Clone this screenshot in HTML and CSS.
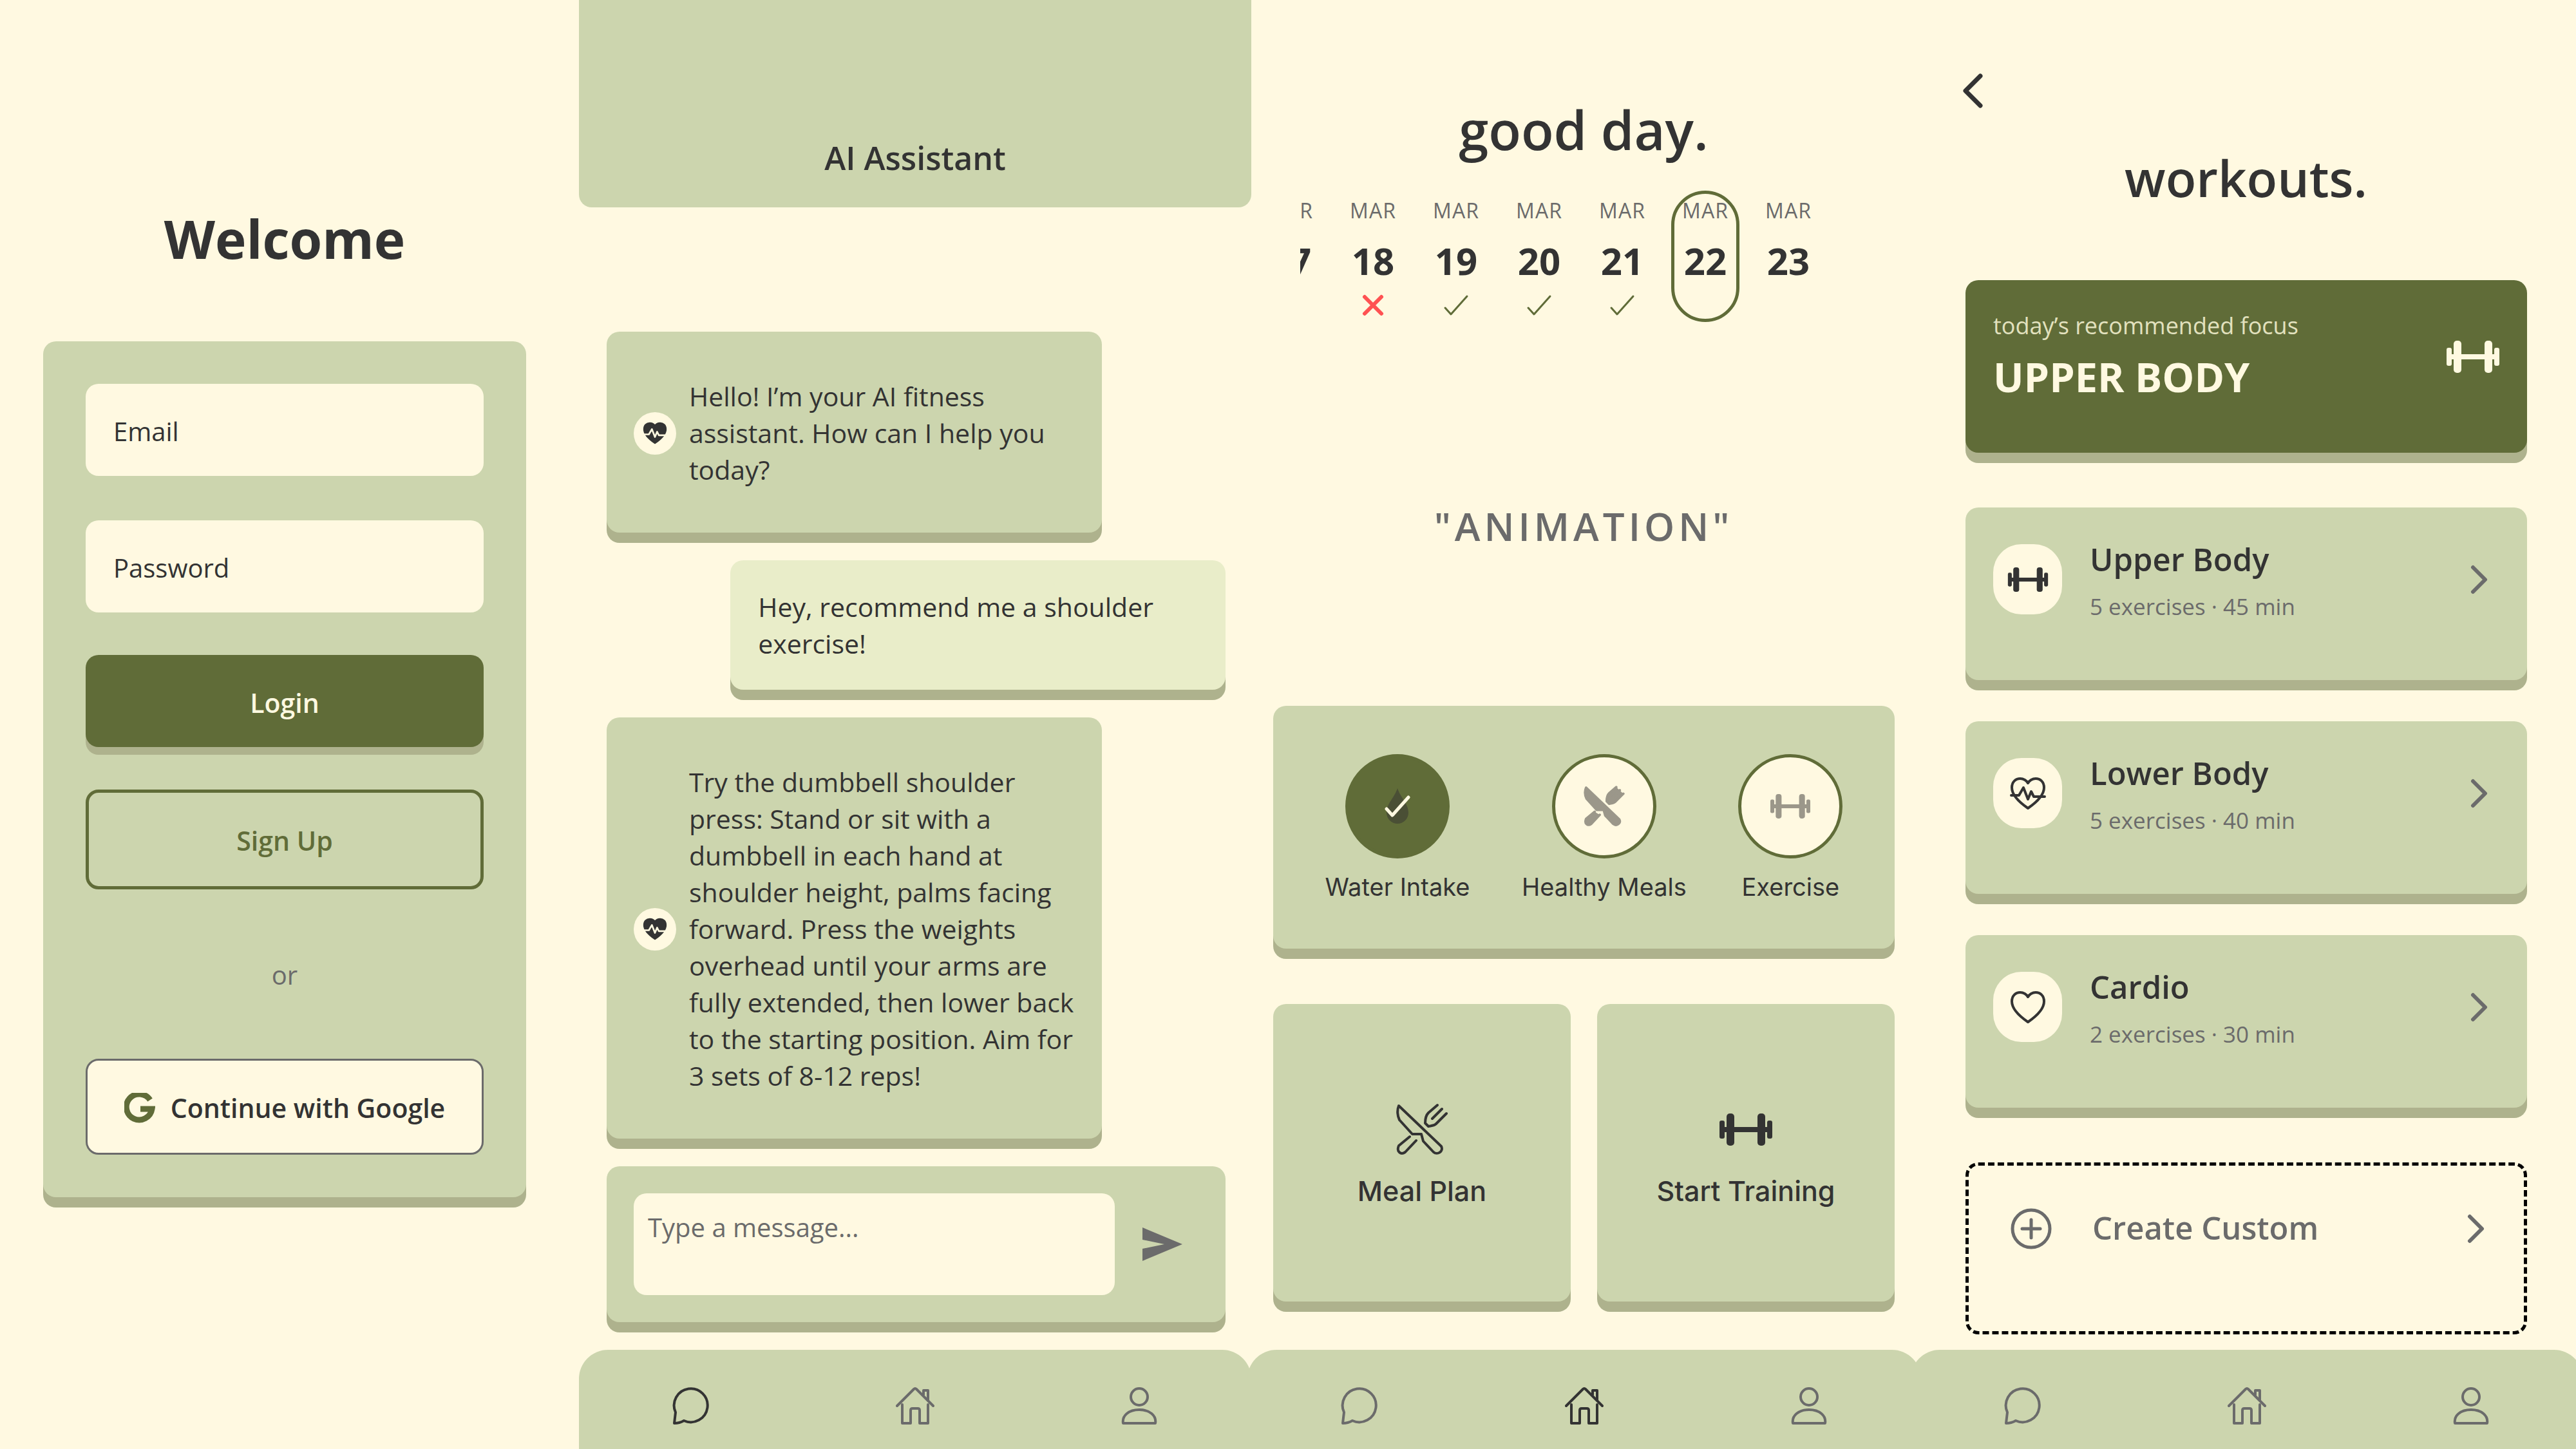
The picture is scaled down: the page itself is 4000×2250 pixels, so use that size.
FILE: index.html
```html
<!DOCTYPE html>
<html lang="en">
<head>
<meta charset="utf-8">
<meta name="viewport" content="width=device-width, initial-scale=1">
<title>Fitness app</title>
<link rel="stylesheet" href="styles.css">
</head>
<body>
<svg class="sprite" aria-hidden="true">
  <symbol id="i-chat" viewBox="0 0 60 60"><path d="M4 57 L6 40 A26 26 0 1 1 19 53 C14 56 9 57 4 57 Z"/></symbol>
  <symbol id="i-home" viewBox="0 0 60 60"><path d="M10 28 V57 H23 V37 Q23 34 26 34 H34 Q37 34 37 37 V57 H50 V28 M2 30 L28 4 Q30 2 32 4 L58 30 M43 13 V6 H50 V21"/></symbol>
  <symbol id="i-user" viewBox="0 0 60 60"><circle cx="30" cy="16" r="13"/><path d="M5 57 H55 C57 45 46 36 30 36 C14 36 3 45 5 57 Z"/></symbol>
  <symbol id="i-dumbbell" viewBox="0 0 82 50"><rect x="0" y="11" width="8" height="28" rx="3"/><rect x="11" y="0" width="12" height="50" rx="5"/><rect x="6" y="21" width="70" height="8"/><rect x="59" y="0" width="12" height="50" rx="5"/><rect x="74" y="11" width="8" height="28" rx="3"/></symbol>
  <symbol id="i-meal" viewBox="0 0 82 82"><path d="M5 4 C2 11 3 20 6 26 L26 48 H40 L43 59 L59 76 C65 81 75 75 71 67 Z M65 3 L51 15 C46 20 46 27 46 31 L51 36 C56 35 60 35 63 32 L79 16 M72 9 L57 24 M22 52 L5 66 C1 75 8 81 15 76 L32 58"/></symbol>
  <symbol id="i-heart" viewBox="0 0 56 52"><path d="M28 49 C12 38 3 28 3 17 C3 8 9 3 16 3 C21 3 26 6 28 10 C30 6 35 3 40 3 C47 3 53 8 53 17 C53 28 44 38 28 49 Z"/></symbol>
  <symbol id="i-pulse" viewBox="0 0 56 52"><path d="M2 29 H14 L21 17 L28 35 L33 23 L37 31 H54"/></symbol>
  <symbol id="i-next" viewBox="0 0 28 46"><path d="M4 4 L23 23 L4 42"/></symbol>
  <symbol id="i-check" viewBox="0 0 40 34"><path d="M3 21 L12 31 L37 3"/></symbol>
</svg>

<main class="board">
  <section class="screen login">
    <h1 class="login-title">Welcome</h1>
    <form class="card login-card">
      <div class="fields">
        <input class="field" type="email" placeholder="Email" aria-label="Email">
        <input class="field" type="password" placeholder="Password" aria-label="Password">
      </div>
      <button class="btn btn-primary" type="button">Login</button>
      <button class="btn btn-outline" type="button">Sign Up</button>
      <p class="or">or</p>
      <button class="btn btn-google" type="button">
        <svg class="g-logo" viewBox="0 0 48 48" aria-hidden="true"><path d="M40 11 A20 20 0 1 0 43 25 H25"/></svg>
        Continue with Google
      </button>
    </form>
  </section>

  <section class="screen chat">
    <header class="chat-head"><h1 class="chat-title">AI Assistant</h1></header>
    <div class="thread">
      <article class="card bubble bot">
        <span class="avatar"><svg viewBox="0 0 56 52" aria-hidden="true"><use href="#i-heart"/><use class="beat" href="#i-pulse"/></svg></span>
        <p class="msg">Hello! I’m your AI fitness assistant. How can I help you today?</p>
      </article>
      <article class="card bubble me">
        <p class="msg">Hey, recommend me a shoulder exercise!</p>
      </article>
      <article class="card bubble bot">
        <span class="avatar"><svg viewBox="0 0 56 52" aria-hidden="true"><use href="#i-heart"/><use class="beat" href="#i-pulse"/></svg></span>
        <p class="msg">Try the dumbbell shoulder press: Stand or sit with a dumbbell in each hand at shoulder height, palms facing forward. Press the weights overhead until your arms are fully extended, then lower back to the starting position. Aim for 3 sets of 8-12 reps!</p>
      </article>
      <form class="card composer">
        <textarea class="draft" rows="2" placeholder="Type a message..." aria-label="Message"></textarea>
        <button class="send" type="button" aria-label="Send"><svg viewBox="0 0 62 52" aria-hidden="true"><path d="M0 0 L62 26 L0 52 V33 L34 26 L0 19 Z"/></svg></button>
      </form>
    </div>
    <nav class="tabs" aria-label="Chat tabs">
      <a class="tab active" href="#chat" aria-label="Chat"><svg><use href="#i-chat"/></svg></a>
      <a class="tab" href="#home" aria-label="Home"><svg><use href="#i-home"/></svg></a>
      <a class="tab" href="#profile" aria-label="Profile"><svg><use href="#i-user"/></svg></a>
    </nav>
  </section>

  <section class="screen home">
    <h1 class="page-title home-title">good day.</h1>
    <ol class="days">
      <li class="day"><span class="month">MAR</span><span class="date">17</span></li>
      <li class="day"><span class="month">MAR</span><span class="date">18</span><svg class="mark missed" viewBox="0 0 40 34"><path d="M7 4 L33 30 M33 4 L7 30"/></svg></li>
      <li class="day"><span class="month">MAR</span><span class="date">19</span><svg class="mark"><use href="#i-check"/></svg></li>
      <li class="day"><span class="month">MAR</span><span class="date">20</span><svg class="mark"><use href="#i-check"/></svg></li>
      <li class="day"><span class="month">MAR</span><span class="date">21</span><svg class="mark"><use href="#i-check"/></svg></li>
      <li class="day today"><span class="month">MAR</span><span class="date">22</span></li>
      <li class="day"><span class="month">MAR</span><span class="date">23</span></li>
    </ol>
    <p class="stage">"ANIMATION"</p>
    <div class="home-cards">
      <ul class="card goals">
        <li class="goal"><span class="ring done">
          <svg class="drop" viewBox="0 0 40 56"><path d="M20 0 C25 15 37 24 37 38 A17 17 0 0 1 3 38 C3 24 15 15 20 0 Z"/></svg>
          <svg class="tick"><use href="#i-check"/></svg>
        </span><span class="goal-name">Water Intake</span></li>
        <li class="goal"><span class="ring"><svg class="goal-meal"><use href="#i-meal"/></svg></span><span class="goal-name">Healthy Meals</span></li>
        <li class="goal"><span class="ring"><svg class="goal-bell"><use href="#i-dumbbell"/></svg></span><span class="goal-name">Exercise</span></li>
      </ul>
      <div class="tiles">
        <button class="card tile" type="button"><svg class="tile-icon line"><use href="#i-meal"/></svg>Meal Plan</button>
        <button class="card tile" type="button"><svg class="tile-icon solid"><use href="#i-dumbbell"/></svg>Start Training</button>
      </div>
    </div>
    <nav class="tabs" aria-label="Home tabs">
      <a class="tab" href="#chat" aria-label="Chat"><svg><use href="#i-chat"/></svg></a>
      <a class="tab active" href="#home" aria-label="Home"><svg><use href="#i-home"/></svg></a>
      <a class="tab" href="#profile" aria-label="Profile"><svg><use href="#i-user"/></svg></a>
    </nav>
  </section>

  <section class="screen workouts">
    <a class="back" href="#home" aria-label="Back"><svg viewBox="0 0 32 54" aria-hidden="true"><path d="M28 4 L5 27 L28 50"/></svg></a>
    <h1 class="page-title workouts-title">workouts.</h1>
    <div class="plan">
      <a class="card focus" href="#focus">
        <span><span class="eyebrow">today’s recommended focus</span><strong class="focus-name">UPPER BODY</strong></span>
        <svg class="focus-icon"><use href="#i-dumbbell"/></svg>
      </a>
      <div class="routines">
        <a class="card routine" href="#upper">
          <span class="badge"><svg class="solid small-bell"><use href="#i-dumbbell"/></svg></span>
          <span class="info"><span class="name">Upper Body</span><span class="meta">5 exercises · 45 min</span></span>
          <svg class="next"><use href="#i-next"/></svg>
        </a>
        <a class="card routine" href="#lower">
          <span class="badge"><svg class="line heart" viewBox="0 0 56 52"><use href="#i-heart"/><use href="#i-pulse"/></svg></span>
          <span class="info"><span class="name">Lower Body</span><span class="meta">5 exercises · 40 min</span></span>
          <svg class="next"><use href="#i-next"/></svg>
        </a>
        <a class="card routine" href="#cardio">
          <span class="badge"><svg class="line heart" viewBox="0 0 56 52"><use href="#i-heart"/></svg></span>
          <span class="info"><span class="name">Cardio</span><span class="meta">2 exercises · 30 min</span></span>
          <svg class="next"><use href="#i-next"/></svg>
        </a>
      </div>
      <button class="create" type="button">
        <svg class="plus" viewBox="0 0 64 64" aria-hidden="true"><circle cx="32" cy="32" r="29"/><path d="M32 18 V46 M18 32 H46"/></svg>
        <span class="create-name">Create Custom</span>
        <svg class="next"><use href="#i-next"/></svg>
      </button>
    </div>
    <nav class="tabs" aria-label="Workout tabs">
      <a class="tab" href="#chat" aria-label="Chat"><svg><use href="#i-chat"/></svg></a>
      <a class="tab" href="#home" aria-label="Home"><svg><use href="#i-home"/></svg></a>
      <a class="tab" href="#profile" aria-label="Profile"><svg><use href="#i-user"/></svg></a>
    </nav>
  </section>
</main>
</body>
</html>
```
FILE: styles.css
```css
:root {
  --cream: #fff9e1;
  --sage: #ccd5ae;
  --pale: #e9edc9;
  --olive: #606c38;
  --shade: #aeb28d;
  --ink: #333333;
  --muted: #6b6b6b;
  --radius: 20px;
}

* { box-sizing: border-box; }

body {
  margin: 0;
  background: var(--cream);
  color: var(--ink);
  font-family: "Open Sans", "Noto Sans", sans-serif;
  font-size: 40px;
  line-height: 57px;
  overflow-x: hidden;
}

h1, p, ul, ol { margin: 0; padding: 0; }
ul, ol { list-style: none; }
a { color: inherit; text-decoration: none; }
button, input, textarea { font: inherit; color: inherit; border: 0; }
button { background: none; padding: 0; cursor: pointer; }
svg { display: block; flex: none; fill: none; stroke: currentColor; stroke-width: 4; stroke-linecap: round; stroke-linejoin: round; }
.sprite { position: absolute; width: 0; height: 0; }
.solid { fill: currentColor; stroke: none; }

.board {
  display: grid;
  grid-template-columns: 899fr 1044fr 1032fr 1025fr;
  min-height: 100vh;
}
.screen { display: flex; flex-direction: column; min-width: 0; }

.card {
  background: var(--sage);
  border-radius: var(--radius);
  box-shadow: 0 16px 0 var(--shade);
}

/* Login */
.login { padding: 314px 82px 0 67px; }
.login-title { font-size: 82px; line-height: 112px; font-weight: 700; text-align: center; }
.login-card { display: flex; flex-direction: column; gap: 66px; margin-top: 104px; padding: 66px; }
.fields { display: flex; flex-direction: column; gap: 69px; }
.field { width: 100%; padding: 45px 43px 41px; background: var(--cream); border-radius: var(--radius); outline: 0; }
.field::placeholder { color: var(--ink); opacity: 1; }
.btn { display: flex; align-items: center; justify-content: center; border-radius: var(--radius); font-weight: 600; font-size: 41px; white-space: nowrap; }
.btn-primary { padding: 46px 0 40px; background: var(--olive); color: var(--cream); box-shadow: 0 12px 0 var(--shade); }
.btn-outline { padding: 46px 0 42px; border: 5px solid var(--olive); color: var(--olive); }
.or { padding: 38px 0 36px; text-align: center; color: var(--muted); }
.btn-google { gap: 24px; padding: 45px 0 41px; border: 3px solid var(--muted); background: var(--cream); }
.g-logo { width: 48px; height: 48px; color: var(--olive); stroke-width: 9; stroke-linecap: butt; stroke-linejoin: miter; }

/* Chat */
.chat-head { padding: 211px 40px 43px; background: var(--sage); border-radius: 0 0 var(--radius) var(--radius); text-align: center; }
.chat-title { font-size: 50px; line-height: 68px; font-weight: 600; }
.thread { display: flex; flex-direction: column; gap: 43px; padding: 193px 40px 43px 43px; }
.bubble { display: flex; align-items: center; gap: 20px; width: 80%; }
.msg { font-size: 41px; }
.bot { padding: 72px 30px 69px 42px; }
.me { align-self: flex-end; padding: 44px 43px 43px; background: var(--pale); }
.avatar { display: flex; align-items: center; justify-content: center; flex: none; width: 66px; height: 66px; border-radius: 50%; background: var(--cream); }
.avatar svg { width: 38px; height: 35px; fill: currentColor; }
.avatar .beat { fill: none; stroke: var(--cream); }
.composer { display: flex; align-items: center; gap: 18px; padding: 42px; }
.draft { flex: 1; min-width: 0; padding: 24px 22px 20px; background: var(--cream); border-radius: var(--radius); outline: 0; resize: none; }
.draft::placeholder { color: var(--muted); opacity: 1; }
.send { padding: 0 25px; color: var(--muted); }
.send svg { width: 62px; height: 52px; fill: currentColor; stroke: none; }

/* Bottom tabs */
.tabs { display: grid; grid-template-columns: repeat(3, 1fr); margin-top: auto; padding: 57px 0 37px; background: var(--sage); border-radius: 45px 45px 0 0; color: var(--muted); }
.home .tabs { margin: 0 -8px 0 -6px; }
.workouts .tabs { margin-left: -8px; margin-right: -11px; }
.tab { display: flex; justify-content: center; }
.tab svg { width: 60px; height: 60px; }
.active { color: var(--ink); }

/* Home */
.page-title { line-height: 108px; font-weight: 600; text-align: center; }
.home-title { margin-top: 147px; font-size: 83px; }
.days { display: flex; justify-content: flex-end; gap: 23px; margin: 41px 145px 0 76px; overflow: hidden; }
.day { display: flex; flex-direction: column; align-items: center; flex: none; width: 106px; height: 204px; padding-top: 4px; border: 5px solid transparent; border-radius: 53px; }
.today { border-color: var(--olive); }
.month { font-size: 32px; line-height: 44px; letter-spacing: 1px; color: var(--muted); }
.date { margin-top: 16px; font-size: 58px; line-height: 80px; font-weight: 700; }
.mark { width: 40px; height: 34px; margin-top: 12px; color: var(--olive); stroke-width: 3; }
.missed { color: #ff5252; stroke-width: 6; }
.stage { margin: auto 0; padding-top: 38px; font-size: 60px; line-height: 84px; font-weight: 600; letter-spacing: 6px; text-align: center; color: var(--muted); }
.home-cards { display: flex; flex-direction: column; gap: 86px; padding: 0 33px 75px 34px; font-family: Inter, "Liberation Sans", sans-serif; }
.goals { display: flex; justify-content: space-evenly; padding: 75px 0 70px; }
.goal { display: flex; flex-direction: column; align-items: center; gap: 18px; }
.ring { display: grid; place-items: center; width: 162px; height: 162px; border: 5px solid var(--olive); border-radius: 50%; background: var(--cream); color: #9b978a; }
.ring svg { grid-area: 1 / 1; }
.done { background: var(--olive); color: var(--cream); }
.drop { width: 40px; height: 56px; fill: #4a4f35; stroke: none; }
.tick { width: 40px; height: 34px; stroke-width: 5; }
.goal-meal { width: 64px; height: 64px; fill: currentColor; stroke-width: 5; }
.goal-bell { width: 62px; height: 38px; fill: currentColor; stroke: none; }
.goal-name { font-size: 38px; line-height: 52px; }
.tiles { display: grid; grid-template-columns: 1fr 1fr; gap: 41px; }
.tile { display: flex; flex-direction: column; align-items: center; gap: 25px; padding: 154px 0 143px; font-size: 43px; line-height: 58px; font-weight: 500; }
.tile-icon { width: 82px; height: 82px; }

/* Workouts */
.back { align-self: flex-start; margin: 114px 0 0 72px; }
.back svg { width: 32px; height: 54px; stroke-width: 7; }
.workouts-title { margin-top: 54px; font-size: 78px; }
.plan { display: flex; flex-direction: column; gap: 85px; padding: 105px 76px 24px 77px; }
.focus { display: flex; align-items: center; justify-content: space-between; padding: 46px 43px 76px; background: var(--olive); color: var(--cream); }
.eyebrow { display: block; font-size: 36px; line-height: 50px; color: #e2e1be; }
.focus-name { display: block; margin-top: 12px; font-size: 63px; line-height: 84px; }
.focus-icon { width: 82px; height: 50px; fill: currentColor; stroke: none; }
.routines { display: flex; flex-direction: column; gap: 64px; }
.routine { display: flex; align-items: center; gap: 43px; padding: 46px 60px 91px 43px; }
.badge { display: grid; place-items: center; flex: none; width: 107px; height: 109px; border-radius: 44px; background: var(--cream); }
.small-bell { width: 64px; height: 38px; }
.heart { width: 56px; height: 52px; }
.info { flex: 1; }
.name, .meta { display: block; }
.name { font-size: 49px; line-height: 68px; font-weight: 600; }
.meta { margin-top: 17px; font-size: 35px; line-height: 46px; color: var(--muted); }
.next { width: 28px; height: 46px; stroke-width: 6; color: var(--muted); }
.create { display: flex; align-items: center; gap: 63px; padding: 62px 60px 123px 65px; border: 5px dashed #000000; border-radius: var(--radius); color: var(--muted); text-align: left; }
.plus { width: 64px; height: 64px; stroke-width: 5; }
.create-name { flex: 1; padding-bottom: 4px; font-size: 49px; line-height: 68px; font-weight: 600; }
```
